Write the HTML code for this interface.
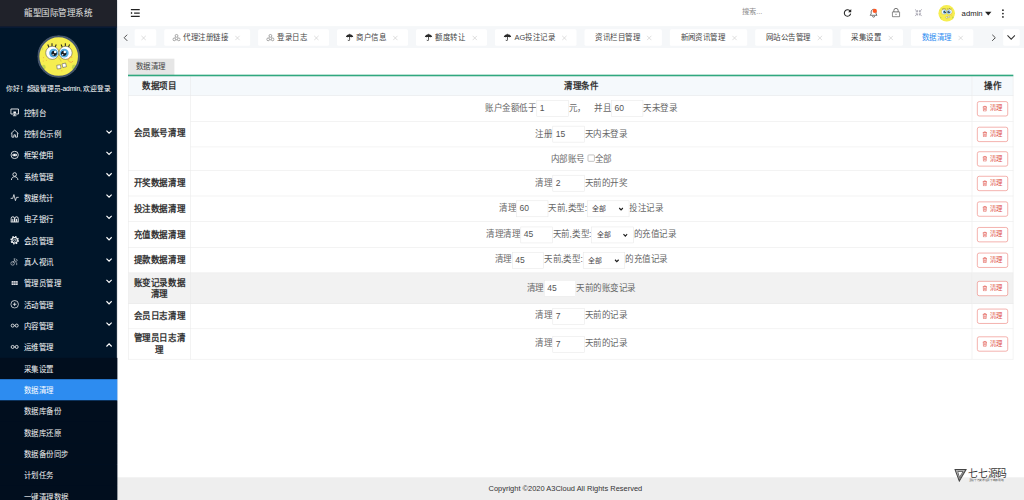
<!DOCTYPE html>
<html lang="zh-CN"><head>
<meta charset="utf-8">
<title>龍聖国际管理系统</title>
<style>
*{box-sizing:border-box;margin:0;padding:0}
html,body{width:1024px;height:500px;overflow:hidden;background:#fff}
body{font-family:"Liberation Sans",sans-serif;font-size:14px;color:#333}
#stage{position:absolute;left:0;top:0;width:1920px;height:938px;transform:scale(0.533333);transform-origin:0 0;background:#fff;overflow:hidden}
a{color:inherit;text-decoration:none}
ul{list-style:none}

/* ---------- sidebar ---------- */
#side{position:absolute;left:0;top:0;width:219px;height:938px;background:#001529;box-shadow:1px 0 2.5px rgba(0,21,41,.4);z-index:5;color:#fff}
#logo{position:absolute;left:0;top:0;width:219px;height:50px;background:#20222a;color:#e2e2e2;font-size:16px;line-height:50px;text-align:center;letter-spacing:0}
#user{position:absolute;left:0;top:50px;width:219px;height:141px;border-top:2px solid #0b1d3a}
#user .av{position:absolute;left:70px;top:14px;width:80px;height:80px}
#user .hello{line-height:17px;position:absolute;left:0;top:106px;width:219px;text-align:center;font-size:12.7px;color:#fff;white-space:nowrap;letter-spacing:-.35px}
#nav{position:absolute;left:0;top:190.6px;width:219.5px}
#nav li{position:relative;height:40px;line-height:42px;font-size:14px;color:#fff;padding-left:45px;white-space:nowrap}
#nav li svg.ic{position:absolute;left:19px;top:11.5px;width:17px;height:17px}
#nav li svg.ar{position:absolute;left:198px;top:10px;width:13px;height:13px}
#nav li.sub{background:#010e1e;color:#f2f2f2}
#nav li.on{background:#2d8cf0;color:#fff}

/* ---------- header ---------- */
#top{position:absolute;left:219px;top:0;width:1701px;height:50px;background:#fff}
#top svg{position:absolute}
#top .search{line-height:18px;position:absolute;left:1173px;top:14px;font-size:13.5px;color:#8a8a8a}
#top .admin{line-height:18px;position:absolute;left:1584px;top:16px;font-size:14.5px;color:#222}
#top .caret{position:absolute;left:1627.5px;top:22px;width:0;height:0;border-left:6.5px solid transparent;border-right:6.5px solid transparent;border-top:7px solid #222}

/* ---------- tabs ---------- */
#tabs{position:absolute;left:219px;top:49px;width:1701px;height:41px;background:#f5f7f9}
#tabs .t{position:absolute;top:5.5px;height:31px;background:#fff;border-radius:3px;font-size:14px;line-height:31px;color:#444;white-space:nowrap}
#tabs .t span{position:absolute;top:0}
#tabs .t svg{position:absolute}
#tabs .t .x{position:absolute;top:11.2px;width:10.5px;height:10.5px}
#tabs .t.on{color:#2d8cf0}

/* ---------- body ---------- */
#crumb{position:absolute;left:239.5px;top:110px;width:87px;height:31px;background:#e6e6e6;font-size:14px;line-height:31px;text-align:center;color:#444}
#gline{position:absolute;left:239.5px;top:140.3px;width:1660.5px;height:2.4px;background:#30a87f;z-index:3}
table{position:absolute;left:240px;top:142px;width:1660px;border-collapse:collapse;table-layout:fixed;font-size:16px;color:#666}
th,td{border:1px solid #e9e9e9;text-align:center;vertical-align:middle;padding:0;line-height:22px;white-space:nowrap}
.j{display:inline-block;white-space:nowrap;text-align:justify;text-align-last:justify;vertical-align:baseline}
th{height:37px;background:#f5f9fc;color:#333;font-weight:bold;font-size:16px}
td.n{color:#333;font-weight:bold;font-size:16px;line-height:21px;padding:0 9px}
tr.g td{background:#f2f2f2}
.i{display:inline-block;vertical-align:middle;width:60px;height:31px;border:1px solid #e6e6e6;background:#fff;font-size:16px;line-height:28px;text-align:left;padding-left:5px;color:#555;margin:0}
.s{display:inline-block;vertical-align:middle;position:relative;width:79px;height:31px;border:1px solid #e6e6e6;background:#fff;font-size:13px;line-height:29px;text-align:left;padding-left:9px;color:#444;margin:0}
.s svg{position:absolute;right:10px;top:11px;width:9px;height:8px}
.cb{display:inline-block;vertical-align:middle;width:13px;height:13px;border:1px solid #8e8e8e;border-radius:2px;background:#fff;margin:0 1px 3px 5px}
.b{display:inline-block;vertical-align:middle;position:relative;width:58px;height:28px;border:1.5px solid #ea7068;border-radius:4px;color:#e0524a;font-size:12px;line-height:25px;text-align:left;padding-left:23px;white-space:nowrap;background:#fff}
.b svg{position:absolute;left:9px;top:7px;width:9px;height:11px}

/* ---------- footer ---------- */
#foot{position:absolute;left:220px;top:895px;width:1700px;height:43px;background:#eeeeee}
#foot span{line-height:18px;position:absolute;left:696px;top:11.5px;font-size:14px;color:#333;white-space:nowrap}
#wm{position:absolute;left:1789px;top:877px;width:110px;height:30px;color:#444}
#wm svg{position:absolute;left:0;top:1.5px;width:24px;height:25px}
#wm b{position:absolute;left:26px;top:-0.5px;font-family:"Liberation Serif",serif;font-weight:normal;font-size:18.3px;letter-spacing:.3px;line-height:22px;white-space:nowrap;color:#333}
#wm i{position:absolute;left:27px;top:19.5px;font-style:normal;font-size:5.1px;line-height:7px;white-space:nowrap;color:#555}
</style>
</head>
<body>
<div id="stage">

<!-- SIDEBAR -->
<div id="side">
  <div id="logo"><span class="j" style="width:128px">龍聖国际管理系统</span></div>
  <div id="user">
    <svg class="av" viewBox="0 0 80 80">
      <defs><g id="face">
        <circle cx="40" cy="40" r="39" fill="#f6ee50"></circle>
        <ellipse cx="12" cy="60" rx="3.5" ry="4.5" fill="#c4d64c"></ellipse><ellipse cx="69" cy="60" rx="4" ry="5" fill="#c4d64c"></ellipse><ellipse cx="9.5" cy="25" rx="1.8" ry="3" fill="#d3de55"></ellipse>
        <circle cx="11.5" cy="42" r="1" fill="#f0b040"></circle><circle cx="17" cy="47" r="1" fill="#f0b040"></circle><circle cx="11" cy="48.5" r="1" fill="#f0b040"></circle>
        <path d="M22 23l-2.5-5.500M27.5 21.500V15M33 23l2.5-5.500M47 23l-2.5-5.500M52.5 21.500V15M58 23l2.5-5.5" stroke="#2a2a20" stroke-width="2" fill="none"></path>
        <circle cx="28" cy="33" r="12.3" fill="#fff" stroke="#4a4a40" stroke-width="1"></circle>
        <circle cx="53" cy="33" r="12.3" fill="#fff" stroke="#4a4a40" stroke-width="1"></circle>
        <circle cx="30.5" cy="33.5" r="8.3" fill="#55ade0"></circle><circle cx="50.5" cy="33.5" r="8.3" fill="#55ade0"></circle>
        <circle cx="31.5" cy="34" r="5" fill="#161a22"></circle><circle cx="49.5" cy="34" r="5" fill="#161a22"></circle>
        <circle cx="33.5" cy="31.5" r="2.4" fill="#fff"></circle><circle cx="51.5" cy="31.5" r="2.4" fill="#fff"></circle>
        <circle cx="29.5" cy="36.5" r="1.4" fill="#fff"></circle><circle cx="47.5" cy="36.5" r="1.4" fill="#fff"></circle>
        <path d="M39.5 42c1.5 1.5 4.5 4 5 7.5" fill="none" stroke="#c9b838" stroke-width="1.3"></path>
        <path d="M65.5 41.500a5 5 0 1 0 1.5 7" fill="none" stroke="#f0a848" stroke-width="1.8"></path>
        <rect x="36.8" y="56" width="7" height="7" transform="rotate(-8 40 59)" fill="#fff" stroke="#555" stroke-width="1"></rect>
        <rect x="46.8" y="53" width="7" height="7" transform="rotate(-14 50 56)" fill="#fff" stroke="#555" stroke-width="1"></rect>
        <circle cx="46" cy="66.5" r="1" fill="#f0b040"></circle>
      </g></defs>
      <use href="#face"></use>
      <circle cx="40" cy="40" r="38.1" fill="none" stroke="#44546c" stroke-width="3.8"></circle>
    </svg>
    <div class="hello"><span class="j" style="width:194.8px">你好！超级管理员-admin, 欢迎登录</span></div>
  </div>
  <ul id="nav">
    <li><svg class="ic" viewBox="0 0 18 18"><path d="M1.5 2.5h15v10h-15z" stroke="#fff" fill="none" stroke-width="1.7"></path><path d="M5.5 16h7" stroke="#fff" fill="none" stroke-width="1.7"></path><path d="M6.5 7.5h5v4h-5z" fill="#fff"></path><path d="M9 12.5v3" stroke="#fff" fill="none" stroke-width="1.6"></path></svg><span class="j" style="width:42px">控制台</span></li>
    <li><svg class="ic" viewBox="0 0 18 18"><path d="M1.5 9L9 2l7.5 7M3.5 8v8h4v-4.5h3V16h4V8" stroke="#fff" fill="none" stroke-width="1.6"></path></svg><span class="j" style="width:70px">控制台示例</span><svg class="ar" viewBox="0 0 12 12"><path d="M1.5 3.5L6 8l4.5-4.5" stroke="#fff" stroke-width="2" fill="none"></path></svg></li>
    <li><svg class="ic" viewBox="0 0 18 18"><circle cx="9" cy="9" r="7.3" stroke="#fff" fill="none" stroke-width="1.6"></circle><rect x="4.5" y="6.5" width="9" height="5" rx="2.5" fill="#fff"></rect><path d="M6.5 9h1.3M10.2 9h1.3" stroke="#001529" stroke-width="1.400"></path></svg><span class="j" style="width:56px">框架使用</span><svg class="ar" viewBox="0 0 12 12"><path d="M1.5 3.5L6 8l4.5-4.5" stroke="#fff" stroke-width="2" fill="none"></path></svg></li>
    <li><svg class="ic" viewBox="0 0 18 18"><circle cx="9" cy="5.5" r="3.6" stroke="#fff" fill="none" stroke-width="1.6"></circle><path d="M2.5 16.5c.3-4.5 3-6.5 6.5-6.5s6.2 2 6.5 6.5" stroke="#fff" fill="none" stroke-width="1.6"></path></svg><span class="j" style="width:56px">系统管理</span><svg class="ar" viewBox="0 0 12 12"><path d="M1.5 3.5L6 8l4.5-4.5" stroke="#fff" stroke-width="2" fill="none"></path></svg></li>
    <li><svg class="ic" viewBox="0 0 18 18"><path d="M1 10.5h4.2L7.5 3l3 12 2.2-6.5H17" stroke="#fff" fill="none" stroke-width="1.5"></path></svg><span class="j" style="width:56px">数据统计</span><svg class="ar" viewBox="0 0 12 12"><path d="M1.5 3.5L6 8l4.5-4.5" stroke="#fff" stroke-width="2" fill="none"></path></svg></li>
    <li><svg class="ic" viewBox="0 0 18 18"><path d="M2 14.5V8a3.3 3.3 0 0 1 6.6 0v6.5M9.400 14.5V8A3.3 3.3 0 0 1 16 8v6.5M1 15h16M5.3 9v5.5M12.7 9v5.5" stroke="#fff" fill="none" stroke-width="1.8"></path></svg><span class="j" style="width:56px">电子银行</span><svg class="ar" viewBox="0 0 12 12"><path d="M1.5 3.5L6 8l4.5-4.5" stroke="#fff" stroke-width="2" fill="none"></path></svg></li>
    <li><svg class="ic" viewBox="0 0 18 18"><circle cx="9" cy="9" r="7.2" stroke="#fff" fill="none" stroke-width="2.6" stroke-dasharray="2.9 2.755"></circle><circle cx="9" cy="9" r="5.4" stroke="#fff" fill="none" stroke-width="2"></circle><circle cx="9" cy="9" r="2.2" stroke="#fff" fill="none" stroke-width="1.3"></circle></svg><span class="j" style="width:56px">会员管理</span><svg class="ar" viewBox="0 0 12 12"><path d="M1.5 3.5L6 8l4.5-4.5" stroke="#fff" stroke-width="2" fill="none"></path></svg></li>
    <li><svg class="ic" viewBox="0 0 18 18"><circle cx="5" cy="12.5" r="3.6" stroke="#cfd3d8" fill="none" stroke-width="1.3"></circle><path d="M5 12.5l4-6.5 2.5 5M9 6l-1.5-2.5h3M12 4.5a2 2 0 1 1 0 4" stroke="#cfd3d8" fill="none" stroke-width="1.3"></path><path d="M13 11v5" stroke="#cfd3d8" fill="none" stroke-width="1.3"></path></svg><span class="j" style="width:56px">真人视讯</span><svg class="ar" viewBox="0 0 12 12"><path d="M1.5 3.5L6 8l4.5-4.5" stroke="#fff" stroke-width="2" fill="none"></path></svg></li>
    <li><svg class="ic" viewBox="0 0 18 18"><path d="M3 5h12v8H3z" fill="#e9e9ee"></path><path d="M3 7.7h12M3 10.3h12M7 5v8M11 5v8" stroke="#001529" stroke-width=".7"></path></svg><span class="j" style="width:70px">管理员管理</span><svg class="ar" viewBox="0 0 12 12"><path d="M1.5 3.5L6 8l4.5-4.5" stroke="#fff" stroke-width="2" fill="none"></path></svg></li>
    <li><svg class="ic" viewBox="0 0 18 18"><circle cx="9" cy="9" r="7.5" stroke="#fff" fill="none" stroke-width="1.400"></circle><path d="M9 5.5v7M5.5 9h7" stroke="#fff" fill="none" stroke-width="1.5"></path></svg><span class="j" style="width:56px">活动管理</span><svg class="ar" viewBox="0 0 12 12"><path d="M1.5 3.5L6 8l4.5-4.5" stroke="#fff" stroke-width="2" fill="none"></path></svg></li>
    <li><svg class="ic" viewBox="0 0 18 18"><circle cx="5" cy="9" r="3" stroke="#fff" fill="none" stroke-width="1.6"></circle><circle cx="13" cy="9" r="3" stroke="#fff" fill="none" stroke-width="1.6"></circle><path d="M8 9.5c.6-.8 1.400-.8 2 0" stroke="#fff" fill="none" stroke-width="1.400"></path></svg><span class="j" style="width:56px">内容管理</span><svg class="ar" viewBox="0 0 12 12"><path d="M1.5 3.5L6 8l4.5-4.5" stroke="#fff" stroke-width="2" fill="none"></path></svg></li>
    <li><svg class="ic" viewBox="0 0 18 18"><circle cx="5" cy="9" r="3" stroke="#fff" fill="none" stroke-width="1.6"></circle><circle cx="13" cy="9" r="3" stroke="#fff" fill="none" stroke-width="1.6"></circle><path d="M8 9.5c.6-.8 1.400-.8 2 0" stroke="#fff" fill="none" stroke-width="1.400"></path></svg><span class="j" style="width:56px">运维管理</span><svg class="ar" viewBox="0 0 12 12"><path d="M1.5 8L6 3.5 10.5 8" stroke="#fff" stroke-width="2" fill="none"></path></svg></li>
    <li class="sub"><span class="j" style="width:56px">采集设置</span></li>
    <li class="sub on"><span class="j" style="width:56px">数据清理</span></li>
    <li class="sub"><span class="j" style="width:70px">数据库备份</span></li>
    <li class="sub"><span class="j" style="width:70px">数据库还原</span></li>
    <li class="sub"><span class="j" style="width:84px">数据备份同步</span></li>
    <li class="sub"><span class="j" style="width:56px">计划任务</span></li>
    <li class="sub"><span class="j" style="width:84px">一键清理数据</span></li>
  </ul>
</div>

<!-- HEADER -->
<div id="top">
<svg style="left:25.5px;top:17px;width:17.5px;height:15px" preserveAspectRatio="none" viewBox="0 0 19 15"><path d="M0 1.2h19M7 7.5h12M0 13.8h19" stroke="#222" stroke-width="2.2" fill="none"></path><path d="M0 4.6l4 2.9-4 2.9z" fill="#222"></path></svg>
<svg style="left:1362.0px;top:16px;width:16px;height:16px" viewBox="0 0 16 16"><path d="M13.2 5.2A6 6 0 1 0 14 9.6" fill="none" stroke="#222" stroke-width="2"></path><path d="M15.2 1v6h-6z" fill="#222"></path></svg>
<svg style="left:1409.0px;top:14px;width:20px;height:20px" viewBox="0 0 20 20"><path d="M10 3.5c-3 0-4.6 2.3-4.6 5v3.6l-1.8 2.6h12.8l-1.8-2.6V8.5c0-2.7-1.6-5-4.6-5zM8 16.2a2 2 0 0 0 4 0" fill="none" stroke="#555" stroke-width="1.5"></path><circle cx="12.2" cy="6.4" r="4" fill="#ff5722"></circle></svg>
<svg style="left:1452.5px;top:15px;width:16px;height:17.5px" preserveAspectRatio="none" viewBox="0 0 17 18"><rect x="1" y="7.5" width="15" height="9.5" rx="1.2" fill="none" stroke="#555" stroke-width="1.6"></rect><path d="M4.2 7.5V5a4.3 4.3 0 0 1 8.6 0v2.5" fill="none" stroke="#555" stroke-width="1.6"></path><path d="M7.2 12.2h2.6" stroke="#555" stroke-width="1.4"></path></svg>
<svg style="left:1496.0px;top:17px;width:14px;height:14px" viewBox="0 0 14 14"><g fill="none" stroke="#9a98a6" stroke-width="1.5"><path d="M0.5 0.5l4.5 4.5M5.2 2v3.2H2"></path><path d="M13.5 0.5L9 5M8.8 2v3.2H12"></path><path d="M0.5 13.5L5 9M5.2 12V8.8H2"></path><path d="M13.5 13.5L9 9M8.8 12V8.8H12"></path></g></svg>
<svg style="left:1540.0px;top:9px;width:32px;height:32px" viewBox="0 0 80 80"><use href="#face"></use></svg>
<svg style="left:1659.2px;top:17px;width:5px;height:17px" viewBox="0 0 5 17"><circle cx="2.5" cy="2.2" r="1.65" fill="#222"></circle><circle cx="2.5" cy="8.5" r="1.65" fill="#222"></circle><circle cx="2.5" cy="14.8" r="1.65" fill="#222"></circle></svg>
  <div class="search"><span class="j" style="width:37.3px">搜索...</span></div>
  <div class="admin">admin</div>
  <div class="caret"></div>
</div>

<!-- TABS -->
<div id="tabs">
<div class="t" style="left:32.5px;width:41.0px"><svg class="x" style="left:12.5px" viewBox="0 0 11 11"><path d="M1 1l9 9M10 1l-9 9" stroke="#c8c8c8" stroke-width="1.2" fill="none"></path></svg></div>
<div class="t" style="left:88.5px;width:161.0px"><svg style="left:15px;top:8px;width:16px;height:16px" viewBox="0 0 16 16"><g fill="none" stroke="#8a8a8a" stroke-width="1.4"><circle cx="8" cy="4.2" r="2.6"></circle><circle cx="3.8" cy="10.8" r="2.6"></circle><circle cx="12.2" cy="10.8" r="2.6"></circle><path d="M6 7l-1 1.5M10 7l1 1.5M6.6 11.6h2.8"></path></g></svg><span style="left:36.5px"><span class="j" style="width:84px">代理注册链接</span></span><svg class="x" style="left:132.5px" viewBox="0 0 11 11"><path d="M1 1l9 9M10 1l-9 9" stroke="#c8c8c8" stroke-width="1.2" fill="none"></path></svg></div>
<div class="t" style="left:264.8px;width:133.0px"><svg style="left:15px;top:8px;width:16px;height:16px" viewBox="0 0 16 16"><g fill="none" stroke="#8a8a8a" stroke-width="1.4"><circle cx="8" cy="4.2" r="2.6"></circle><circle cx="3.8" cy="10.8" r="2.6"></circle><circle cx="12.2" cy="10.8" r="2.6"></circle><path d="M6 7l-1 1.5M10 7l1 1.5M6.6 11.6h2.8"></path></g></svg><span style="left:36.5px"><span class="j" style="width:56px">登录日志</span></span><svg class="x" style="left:104.5px" viewBox="0 0 11 11"><path d="M1 1l9 9M10 1l-9 9" stroke="#c8c8c8" stroke-width="1.2" fill="none"></path></svg></div>
<div class="t" style="left:412.9px;width:133.0px"><svg style="left:16px;top:8.5px;width:15px;height:14px" viewBox="0 0 15 14"><path d="M0.3 7.2C0.6 3.4 3.6 1 7.5 1s6.9 2.4 7.2 6.2c-1-.9-2.5-.9-3.4 0-1-.9-2.6-.9-3.8 0-1.2-.9-2.8-.9-3.8 0-.9-.9-2.4-.9-3.4 0z" fill="#2a2a2a"></path><path d="M7.5 0v2M7.5 6.5v5.2a1.5 1.5 0 0 1-3 0" fill="none" stroke="#2a2a2a" stroke-width="1.5"></path></svg><span style="left:36.5px"><span class="j" style="width:56px">商户信息</span></span><svg class="x" style="left:104.5px" viewBox="0 0 11 11"><path d="M1 1l9 9M10 1l-9 9" stroke="#c8c8c8" stroke-width="1.2" fill="none"></path></svg></div>
<div class="t" style="left:561.0px;width:133.0px"><svg style="left:16px;top:8.5px;width:15px;height:14px" viewBox="0 0 15 14"><path d="M0.3 7.2C0.6 3.4 3.6 1 7.5 1s6.9 2.4 7.2 6.2c-1-.9-2.5-.9-3.4 0-1-.9-2.6-.9-3.8 0-1.2-.9-2.8-.9-3.8 0-.9-.9-2.4-.9-3.4 0z" fill="#2a2a2a"></path><path d="M7.5 0v2M7.5 6.5v5.2a1.5 1.5 0 0 1-3 0" fill="none" stroke="#2a2a2a" stroke-width="1.5"></path></svg><span style="left:36.5px"><span class="j" style="width:56px">额度转让</span></span><svg class="x" style="left:104.5px" viewBox="0 0 11 11"><path d="M1 1l9 9M10 1l-9 9" stroke="#c8c8c8" stroke-width="1.2" fill="none"></path></svg></div>
<div class="t" style="left:709.0px;width:153.0px"><svg style="left:16px;top:8.5px;width:15px;height:14px" viewBox="0 0 15 14"><path d="M0.3 7.2C0.6 3.4 3.6 1 7.5 1s6.9 2.4 7.2 6.2c-1-.9-2.5-.9-3.4 0-1-.9-2.6-.9-3.8 0-1.2-.9-2.8-.9-3.8 0-.9-.9-2.4-.9-3.4 0z" fill="#2a2a2a"></path><path d="M7.5 0v2M7.5 6.5v5.2a1.5 1.5 0 0 1-3 0" fill="none" stroke="#2a2a2a" stroke-width="1.5"></path></svg><span style="left:36.5px"><span class="j" style="width:76.2px">AG投注记录</span></span><svg class="x" style="left:124.5px" viewBox="0 0 11 11"><path d="M1 1l9 9M10 1l-9 9" stroke="#c8c8c8" stroke-width="1.2" fill="none"></path></svg></div>
<div class="t" style="left:877.0px;width:144.5px"><span style="left:20.0px"><span class="j" style="width:84px">资讯栏目管理</span></span><svg class="x" style="left:116.0px" viewBox="0 0 11 11"><path d="M1 1l9 9M10 1l-9 9" stroke="#c8c8c8" stroke-width="1.2" fill="none"></path></svg></div>
<div class="t" style="left:1037.0px;width:144.5px"><span style="left:20.0px"><span class="j" style="width:84px">新闻资讯管理</span></span><svg class="x" style="left:116.0px" viewBox="0 0 11 11"><path d="M1 1l9 9M10 1l-9 9" stroke="#c8c8c8" stroke-width="1.2" fill="none"></path></svg></div>
<div class="t" style="left:1196.6px;width:145.4px"><span style="left:20.0px"><span class="j" style="width:84px">网站公告管理</span></span><svg class="x" style="left:116.9px" viewBox="0 0 11 11"><path d="M1 1l9 9M10 1l-9 9" stroke="#c8c8c8" stroke-width="1.2" fill="none"></path></svg></div>
<div class="t" style="left:1357.0px;width:117.0px"><span style="left:20.0px"><span class="j" style="width:56px">采集设置</span></span><svg class="x" style="left:88.5px" viewBox="0 0 11 11"><path d="M1 1l9 9M10 1l-9 9" stroke="#c8c8c8" stroke-width="1.2" fill="none"></path></svg></div>
<div class="t on" style="left:1489.0px;width:116.5px"><span style="left:20.0px"><span class="j" style="width:56px">数据清理</span></span><svg class="x" style="left:88.0px" viewBox="0 0 11 11"><path d="M1 1l9 9M10 1l-9 9" stroke="#c8c8c8" stroke-width="1.2" fill="none"></path></svg></div>
<div style="position:absolute;left:0;top:0;width:32.5px;height:41px;background:#f5f7f9"></div>
<svg style="position:absolute;left:12px;top:14.5px;width:9px;height:13.5px" viewBox="0 0 10 15"><path d="M8.5 1L2 7.5 8.5 14" fill="none" stroke="#333" stroke-width="1.8"></path></svg>
<svg style="position:absolute;left:1640px;top:14.5px;width:9px;height:13.5px" viewBox="0 0 10 15"><path d="M1.5 1L8 7.5 1.5 14" fill="none" stroke="#333" stroke-width="1.8"></path></svg>
<div style="position:absolute;left:1661.5px;top:5.5px;width:31.5px;height:31px;background:#fff;border-radius:3px"></div>
<svg style="position:absolute;left:1669px;top:16px;width:16px;height:10px" viewBox="0 0 16 10"><path d="M1 1.5L8 8.5 15 1.5" fill="none" stroke="#333" stroke-width="1.9"></path></svg>
</div>

<!-- CONTENT -->
<div id="crumb"><span class="j" style="width:56px">数据清理</span></div>
<div id="gline"></div>
<table>
<colgroup><col style="width:117px"><col><col style="width:77px"></colgroup>
<tbody><tr><th><span class="j" style="width:64px">数据项目</span></th><th><span class="j" style="width:64px">清理条件</span></th><th><span class="j" style="width:32px">操作</span></th></tr>
<tr style="height:48px"><td class="n" rowspan="3"><span class="j" style="width:96px">会员账号清理</span></td><td class="c"><span class="j" style="width:96px">账户金额低于</span><span class="i">1</span><span class="j" style="width:32px">元，</span><span style="display:inline-block;width:16px"></span><span class="j" style="width:32px">并且</span><span class="i">60</span><span class="j" style="width:64px">天未登录</span></td><td><span class="b"><svg viewBox="0 0 9 11"><path d="M0.5 2.5h8M3 2.5V1h3v1.5M1.5 2.5l.5 8h5l.5-8M3.6 4.6v4M5.4 4.6v4" fill="none" stroke="#e0524a" stroke-width="1.1"></path></svg><span class="j" style="width:24px">清理</span></span></td></tr>
<tr style="height:48px"><td class="c"><span class="j" style="width:32px">注册</span><span class="i">15</span><span class="j" style="width:80px">天内未登录</span></td><td><span class="b"><svg viewBox="0 0 9 11"><path d="M0.5 2.5h8M3 2.5V1h3v1.5M1.5 2.5l.5 8h5l.5-8M3.6 4.6v4M5.4 4.6v4" fill="none" stroke="#e0524a" stroke-width="1.1"></path></svg><span class="j" style="width:24px">清理</span></span></td></tr>
<tr style="height:44px"><td class="c"><span class="j" style="width:64px">内部账号</span><span class="cb"></span><span class="j" style="width:32px">全部</span></td><td><span class="b"><svg viewBox="0 0 9 11"><path d="M0.5 2.5h8M3 2.5V1h3v1.5M1.5 2.5l.5 8h5l.5-8M3.6 4.6v4M5.4 4.6v4" fill="none" stroke="#e0524a" stroke-width="1.1"></path></svg><span class="j" style="width:24px">清理</span></span></td></tr>
<tr style="height:48px"><td class="n"><span class="j" style="width:96px">开奖数据清理</span></td><td class="c"><span class="j" style="width:32px">清理</span><span class="i">2</span><span class="j" style="width:80px">天前的开奖</span></td><td><span class="b"><svg viewBox="0 0 9 11"><path d="M0.5 2.5h8M3 2.5V1h3v1.5M1.5 2.5l.5 8h5l.5-8M3.6 4.6v4M5.4 4.6v4" fill="none" stroke="#e0524a" stroke-width="1.1"></path></svg><span class="j" style="width:24px">清理</span></span></td></tr>
<tr style="height:48px"><td class="n"><span class="j" style="width:96px">投注数据清理</span></td><td class="c"><span class="j" style="width:32px">清理</span><span class="i">60</span><span class="j" style="width:72.9px">天前,类型:</span><span class="s"><span class="j" style="width:26px">全部</span><svg viewBox="0 0 9 8"><path d="M1 2l3.5 3.6L8 2" fill="none" stroke="#222" stroke-width="2.3"></path></svg></span><span class="j" style="width:64px">投注记录</span></td><td><span class="b"><svg viewBox="0 0 9 11"><path d="M0.5 2.5h8M3 2.5V1h3v1.5M1.5 2.5l.5 8h5l.5-8M3.6 4.6v4M5.4 4.6v4" fill="none" stroke="#e0524a" stroke-width="1.1"></path></svg><span class="j" style="width:24px">清理</span></span></td></tr>
<tr style="height:49px"><td class="n"><span class="j" style="width:96px">充值数据清理</span></td><td class="c"><span class="j" style="width:64px">清理清理</span><span class="i">45</span><span class="j" style="width:72.9px">天前,类型:</span><span class="s"><span class="j" style="width:26px">全部</span><svg viewBox="0 0 9 8"><path d="M1 2l3.5 3.6L8 2" fill="none" stroke="#222" stroke-width="2.3"></path></svg></span><span class="j" style="width:80px">的充值记录</span></td><td><span class="b"><svg viewBox="0 0 9 11"><path d="M0.5 2.5h8M3 2.5V1h3v1.5M1.5 2.5l.5 8h5l.5-8M3.6 4.6v4M5.4 4.6v4" fill="none" stroke="#e0524a" stroke-width="1.1"></path></svg><span class="j" style="width:24px">清理</span></span></td></tr>
<tr style="height:47px"><td class="n"><span class="j" style="width:96px">提款数据清理</span></td><td class="c"><span class="j" style="width:32px">清理</span><span class="i">45</span><span class="j" style="width:72.9px">天前,类型:</span><span class="s"><span class="j" style="width:26px">全部</span><svg viewBox="0 0 9 8"><path d="M1 2l3.5 3.6L8 2" fill="none" stroke="#222" stroke-width="2.3"></path></svg></span><span class="j" style="width:80px">的充值记录</span></td><td><span class="b"><svg viewBox="0 0 9 11"><path d="M0.5 2.5h8M3 2.5V1h3v1.5M1.5 2.5l.5 8h5l.5-8M3.6 4.6v4M5.4 4.6v4" fill="none" stroke="#e0524a" stroke-width="1.1"></path></svg><span class="j" style="width:24px">清理</span></span></td></tr>
<tr class="g" style="height:58px"><td class="n"><span class="j" style="width:96px">账变记录数据</span><br><span class="j" style="width:32px">清理</span></td><td class="c"><span class="j" style="width:32px">清理</span><span class="i">45</span><span class="j" style="width:112px">天前的账变记录</span></td><td><span class="b"><svg viewBox="0 0 9 11"><path d="M0.5 2.5h8M3 2.5V1h3v1.5M1.5 2.5l.5 8h5l.5-8M3.6 4.6v4M5.4 4.6v4" fill="none" stroke="#e0524a" stroke-width="1.1"></path></svg><span class="j" style="width:24px">清理</span></span></td></tr>
<tr style="height:47px"><td class="n"><span class="j" style="width:96px">会员日志清理</span></td><td class="c"><span class="j" style="width:32px">清理</span><span class="i">7</span><span class="j" style="width:80px">天前的记录</span></td><td><span class="b"><svg viewBox="0 0 9 11"><path d="M0.5 2.5h8M3 2.5V1h3v1.5M1.5 2.5l.5 8h5l.5-8M3.6 4.6v4M5.4 4.6v4" fill="none" stroke="#e0524a" stroke-width="1.1"></path></svg><span class="j" style="width:24px">清理</span></span></td></tr>
<tr style="height:57px"><td class="n"><span class="j" style="width:96px">管理员日志清</span><br><span class="j" style="width:16px">理</span></td><td class="c"><span class="j" style="width:32px">清理</span><span class="i">7</span><span class="j" style="width:80px">天前的记录</span></td><td><span class="b"><svg viewBox="0 0 9 11"><path d="M0.5 2.5h8M3 2.5V1h3v1.5M1.5 2.5l.5 8h5l.5-8M3.6 4.6v4M5.4 4.6v4" fill="none" stroke="#e0524a" stroke-width="1.1"></path></svg><span class="j" style="width:24px">清理</span></span></td></tr>
</tbody></table>

<!-- FOOTER -->
<div id="foot"><span>Copyright ©2020 A3Cloud All Rights Reserved</span></div>
<div id="wm"><svg viewBox="0 0 24 25"><g fill="none" stroke="#444"><path d="M1.6 1.2h21L9.7 23.2z" stroke-width="1.9"></path><path d="M6.6 5h10.2L10 16.4z" stroke-width="1.5"></path><path d="M19.6 3.5L9.2 21" stroke-width="1.1"></path><path d="M4 3.3h16.5L9.8 20.5z" stroke-width=".8"></path></g></svg><b><span class="j" style="width:73.2px">七七源码</span></b><i><span class="j" style="width:65px">全站千万资源任意下载使用哦</span></i></div>

</div>


</body></html>
